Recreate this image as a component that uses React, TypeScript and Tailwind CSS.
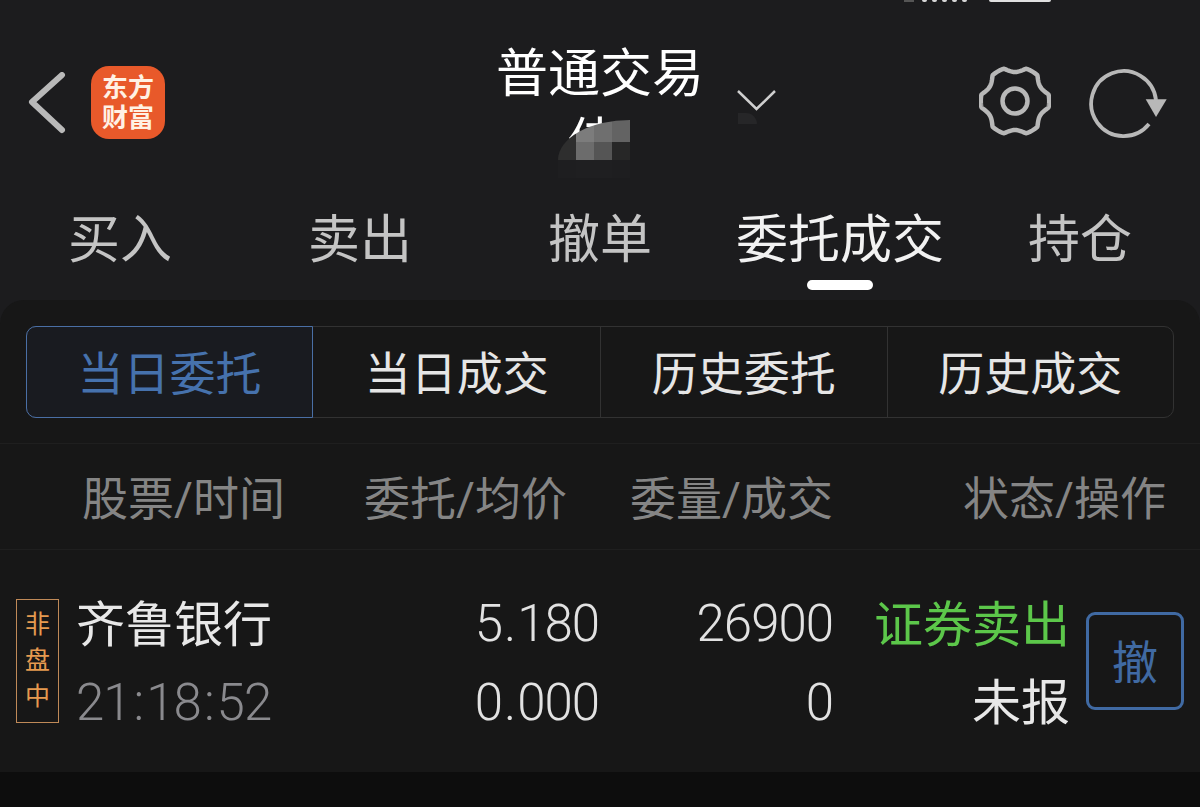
const cjk = "font-['Roboto','Noto_Sans_CJK_SC',sans-serif]";

const tabs = ["买入", "卖出", "撤单", "委托成交", "持仓"];
const subTabs = ["当日委托", "当日成交", "历史委托", "历史成交"];

// pixelated blur over the account name
const mosaic = [
  "#2e2e2e", "#7c7c7c", "#6f6f6f", "#636363",
  "#2e2e2e", "#6c6c6c", "#555555", "#272727",
  "#1e1e20", "#1f1f21", "#1f1f21", "#1e1e20",
];

// six teeth, flat on top, pinched in the notches
function gearPath() {
  const pts: string[] = [];
  for (let i = 0; i < 240; i++) {
    const deg = (i / 240) * 360;
    const off = Math.abs(((deg + 30) % 60) - 30);
    const t = off < 11 ? 1 : (30 - off) / 19;
    const r = 29 + 5.2 * t * t;
    const a = (deg * Math.PI) / 180;
    pts.push(`${(36 + r * Math.cos(a)).toFixed(2)} ${(36 + r * Math.sin(a)).toFixed(2)}`);
  }
  return `M${pts.join("L")}Z`;
}

function Digits({ text, className = "" }: { text: string; className?: string }) {
  return (
    <span className={`text-[51px] leading-[50px] font-light tracking-[-1px] ${className}`}>
      {text.split(/([:.])/).map((p, i) =>
        p === ":" || p === "." ? (
          <span key={i} className={p === ":" ? "px-[3px]" : "px-[2px]"}>
            {p}
          </span>
        ) : (
          p
        )
      )}
    </span>
  );
}

function StatusBar() {
  return (
    <div className="absolute top-0 left-[904px] flex items-start">
      <div className="h-[2px] w-[10px] bg-[#555555]" />
      <div className="ml-[8px] flex gap-[5px]">
        {[0, 1, 2, 3, 4].map((i) => (
          <div key={i} className="h-[2px] w-[5px] rounded-b-full bg-[#d8d8d8]" />
        ))}
      </div>
      <div className="ml-[22px] h-[2px] w-[62px] rounded-b-[2px] bg-[#e0e0e0]" />
    </div>
  );
}

function Header() {
  return (
    <div className="grid h-[190px] grid-cols-[1fr_220px_1fr]">
      <div className="flex items-start pl-[27px] pt-[66px]">
        <svg width="40" height="64" viewBox="0 0 40 64" className="mt-[6px]">
          <path d="M35 3 L5 30 L35 58" fill="none" stroke="#b9b9b9" strokeWidth="6" strokeLinecap="round" strokeLinejoin="round" />
        </svg>
        <div className="ml-[24px] flex h-[73px] w-[74px] flex-col items-center justify-center rounded-[18px] bg-[#e8592a] text-[26px] leading-[30px] font-bold text-[#fff1e4]">
          <span>东方</span>
          <span>财富</span>
        </div>
      </div>
      <div className="relative overflow-hidden">
        <div className="pt-[45px] text-center text-[52px] leading-[60px] whitespace-nowrap text-white">普通交易</div>
        <div className="mt-[9px] pl-[77px] text-[52px] leading-[60px] text-white">佳</div>
        <div className="absolute top-[120px] left-[68px] grid h-[58px] w-[72px] grid-cols-4 grid-rows-[22px_18px_18px] overflow-hidden rounded-tl-[72px_40px]">
          {mosaic.map((c, i) => (
            <div key={i} style={{ backgroundColor: c }} />
          ))}
        </div>
      </div>
      <div className="relative flex items-start justify-end pt-[66px] pr-[32px]">
        <svg width="42" height="24" viewBox="0 0 42 24" className="absolute top-[89px] left-[26px]">
          <path d="M2 2 L20.5 20 L39 2" fill="none" stroke="#cfcfcf" strokeWidth="2.500" />
        </svg>
        <div className="absolute top-[113px] left-[28px] h-[11px] w-[19px] rounded-tr-[16px] bg-[#262628]" />
        <svg width="72" height="72" viewBox="0 0 72 72" className="-mt-px mr-[38px]">
          <path d={gearPath()} fill="none" stroke="#b8b8b8" strokeWidth="4.500" strokeLinejoin="round" />
          <circle cx="36" cy="36" r="12.500" fill="none" stroke="#b8b8b8" strokeWidth="4.500" />
        </svg>
        <svg width="79" height="74" viewBox="0 0 79 74">
          <path d="M60 58 A32.500 32.500 0 1 1 67 34" fill="none" stroke="#b8b8b8" strokeWidth="3.800" />
          <path d="M56.700 33.300 H77.700 L67 51 Z" fill="#b8b8b8" />
        </svg>
      </div>
    </div>
  );
}

function Tabs() {
  return (
    <div className="grid h-[110px] grid-cols-5">
      {tabs.map((t) => {
        const active = t === "委托成交";
        return (
          <div key={t} className={`relative pt-[21px] text-center text-[52px] leading-[60px] whitespace-nowrap ${active ? "text-[#f2f2f2]" : "text-[#c4c4c4]"}`}>
            {t}
            {active && <div className="absolute top-[90px] left-1/2 h-[10px] w-[66px] -translate-x-1/2 rounded-full bg-white" />}
          </div>
        );
      })}
    </div>
  );
}

function SubTabs() {
  return (
    <div className="px-[26px] pt-[26px] pb-[25px]">
      <div className="grid h-[92px] grid-cols-4 rounded-[10px] border border-[#323232]">
        {subTabs.map((t, i) => (
          <div
            key={t}
            className={
              i === 0
                ? "-my-px mr-[0.5px] -ml-px flex items-center justify-center rounded-l-[10px] border border-[#4a6fa5] bg-[#191b20] pt-[4px] text-[46px] text-[#4672ad]"
                : `flex items-center justify-center pt-[4px] text-[46px] text-[#e6e6e6] ${i > 1 ? "border-l border-[#323232]" : ""}`
            }
          >
            {t}
          </div>
        ))}
      </div>
    </div>
  );
}

function TableHead() {
  return (
    <div className="flex h-[107px] items-center border-y border-[#1f1f1f] pt-[4px] text-[46px] leading-none whitespace-nowrap text-[#858585]">
      <div className="w-[284px] pl-[82px]">股票/时间</div>
      <div className="w-[283px] text-right">委托/均价</div>
      <div className="w-[266px] text-right">委量/成交</div>
      <div className="w-[333px] text-right">状态/操作</div>
    </div>
  );
}

function OrderRow() {
  return (
    <div className="flex h-[222px] pt-[49px] whitespace-nowrap">
      <div className="ml-[16px] flex h-[124px] w-[43px] flex-col items-center justify-center border border-[#c08a58] text-[25px] leading-[36px] text-[#e69a50]">
        <span>非</span>
        <span>盘</span>
        <span>中</span>
      </div>
      <div className="ml-[17px] w-[301px]">
        <div className="h-[79px] text-[49px] leading-[54px] text-[#e8e8e8]">齐鲁银行</div>
        <Digits text="21:18:52" className="block text-[#8a8a8e]" />
      </div>
      <div className="w-[222px] text-right text-[#e2e2e2]">
        <div className="h-[79px]">
          <Digits text="5.180" />
        </div>
        <Digits text="0.000" className="block" />
      </div>
      <div className="w-[234px] text-right text-[#e2e2e2]">
        <div className="h-[79px]">
          <Digits text="26900" />
        </div>
        <Digits text="0" className="block" />
      </div>
      <div className="w-[237px] text-right text-[49px] leading-[54px]">
        <div className="h-[78px] text-[#5cc74a]">证券卖出</div>
        <div className="text-[#e8e8e8]">未报</div>
      </div>
      <div className="mt-[13px] ml-[16px] flex h-[98px] w-[98px] items-center justify-center rounded-[9px] border-[3px] border-[#406aa3] pt-[4px] text-[46px] text-[#406aa3]">
        撤
      </div>
    </div>
  );
}

export default function App() {
  return (
    <div className={`relative h-[807px] w-[1200px] overflow-hidden bg-[#1c1c1e] ${cjk}`}>
      <StatusBar />
      <Header />
      <Tabs />
      <div className="rounded-t-[24px] bg-[#171717]">
        <SubTabs />
        <TableHead />
        <OrderRow />
      </div>
      <div className="h-[35px] bg-[#0d0d0d]" />
    </div>
  );
}
